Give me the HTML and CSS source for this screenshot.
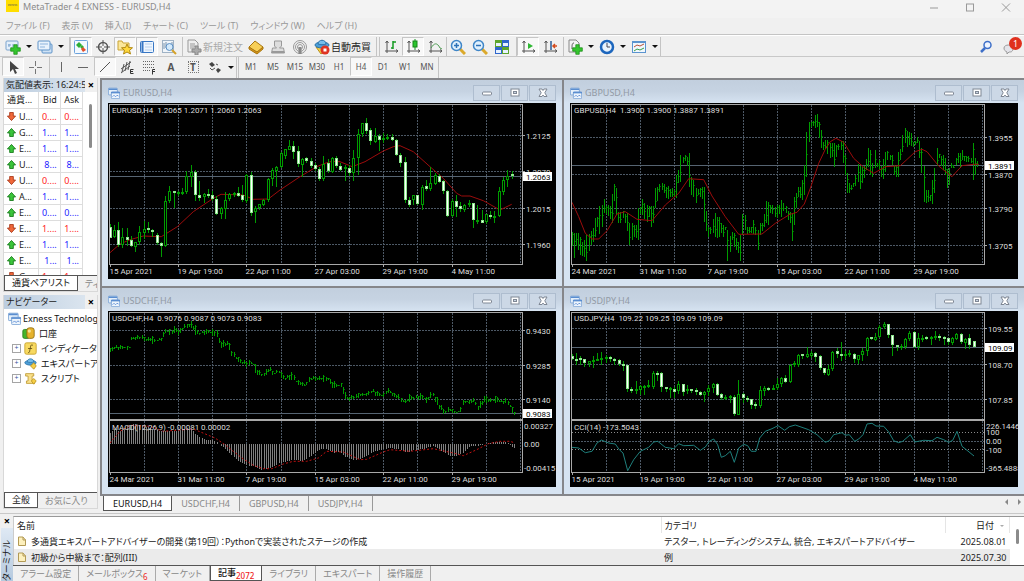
FILE: index.html
```html
<!DOCTYPE html>
<html lang="ja">
<head>
    <meta charset="UTF-8">
    <meta name="viewport" content="width=device-width, initial-scale=1.0">
    <title>MetaTrader 4 EXNESS - EURUSD,H4</title>
    <link rel="stylesheet" href="styles.css">
</head>
<body>

<svg class="sprite" aria-hidden="true">
    <symbol id="charts" viewBox="0 0 16 16"><rect x="0.5" y="1.5" width="12" height="9" rx="1" fill="#e4effa" stroke="#6f9bd1"/><path d="M1 3h11" stroke="#5b8ed0" stroke-width="2"/><rect x="4.5" y="6.5" width="11" height="9" rx="1" fill="#eef5fc" stroke="#6f9bd1"/><path d="M4 7.500h12" stroke="#5b8ed0" stroke-width="2"/><path d="M6 13l2-2 2 2 2-2 2 1" fill="none" stroke="#4a7fd0"/></symbol>
    <symbol id="plus" viewBox="0 0 16 16"><path d="M5.5 1h5v4.500H15v5h-4.500V15h-5v-4.500H1v-5h4.500z" fill="#35c52e" stroke="#12860f"/></symbol>
    <symbol id="axes" viewBox="0 0 16 16"><path d="M4 2v12M2 12h13M2.500 4L4 2l1.500 2M13 10.500l2 1.500-2 1.500" fill="none" stroke="#555"/></symbol>
    <symbol id="up" viewBox="0 0 10 10"><path d="M5 .5L9.5 5.500H7v4H3v-4H.5z" fill="#3bc53b" stroke="#167a1b"/></symbol>
    <symbol id="down" viewBox="0 0 10 10"><path d="M5 9.5L9.5 4.500H7v-4H3v4H.5z" fill="#f0683a" stroke="#a8381a"/></symbol>
    <symbol id="doc" viewBox="0 0 10 10"><path d="M1.500 1h4.500l2.500 3v5.500h-7z" fill="#fdf0bd" stroke="#b39a55"/><path d="M6 1v3h3" fill="none" stroke="#b39a55"/></symbol>
    <symbol id="min" viewBox="0 0 12 10"><rect x="1.5" y="4" width="9" height="3" rx="1" fill="#fff" stroke="#7f8794"/></symbol>
    <symbol id="max" viewBox="0 0 12 10"><rect x="2" y="1" width="8" height="7" fill="#fff" stroke="#7f8794"/><rect x="4.5" y="3.5" width="3" height="2" fill="#c9d5e3" stroke="#7f8794"/></symbol>
    <symbol id="cls" viewBox="0 0 12 10"><path d="M2 1h3l1 1.500L7 1h3L7.800 4.800 10 8.500H7L6 7 5 8.500H2l2.200-3.700z" fill="#fff" stroke="#7f8794"/></symbol>
</svg>

<header class="titlebar">
    <span class="logo">exness</span>
    <h1>MetaTrader 4 EXNESS - EURUSD,H4</h1>
    <div class="caption">
        <button aria-label="Minimize"><svg viewBox="0 0 10 10"><path d="M1 6.500h8"/></svg></button>
        <button aria-label="Maximize"><svg viewBox="0 0 10 10"><rect x="1.5" y="2.5" width="7" height="7"/></svg></button>
        <button aria-label="Close"><svg viewBox="0 0 10 10"><path d="M1 2l8 8M9 2l-8 8"/></svg></button>
    </div>
</header>

<nav class="menu">
    <button>ファイル (F)</button>
    <button>表示 (V)</button>
    <button>挿入(I)</button>
    <button>チャート (C)</button>
    <button>ツール (T)</button>
    <button>ウィンドウ (W)</button>
    <button>ヘルプ (H)</button>
</nav>

<div class="toolbars">
    <div class="toolbar">
        <button class="tool" aria-label="New chart"><svg viewBox="0 0 16 16"><rect x="1" y="2" width="12" height="9" rx="1" fill="#e4effa" stroke="#7aa3cd"/><path d="M3 6h3M4 5v3M8 5v3" stroke="#7aa3cd"/><use href="#plus" x="5" y="5" width="11" height="11"/></svg></button>
        <button class="drop" aria-label="Chart list"></button>
        <button class="tool" aria-label="Profiles"><svg viewBox="0 0 16 16"><rect x="5" y="5" width="10" height="9" rx="1" fill="#cfe2f5" stroke="#5e93c8"/><rect x="1" y="2" width="12" height="9" rx="1" fill="#e8f2fc" stroke="#5e93c8"/><path d="M3 5h8M3 8h5" stroke="#8db4dd"/></svg></button>
        <button class="drop" aria-label="Profile list"></button>
        <i class="sep wide"></i>
        <button class="tool on" aria-label="Market watch"><svg viewBox="0 0 16 16"><rect x="1.5" y="1.5" width="13" height="13" rx="1" fill="#f3f9ff" stroke="#6ba2dc"/><path d="M3 6l3-3 3 3-3 3z" fill="#2fae35"/><path d="M7 8l2-2 2 2-2 2z" fill="#2fae35"/><path d="M8 10l2-2 3 3-3 2z" fill="#e3502b"/></svg></button>
        <button class="tool" aria-label="Data window"><svg viewBox="0 0 16 16"><circle cx="8" cy="8" r="4.5" fill="none" stroke="#555" stroke-width="1.5"/><path d="M8 1v6M8 9v6M1 8h6M9 8h6" stroke="#555"/></svg></button>
        <button class="tool on" aria-label="Navigator"><svg viewBox="0 0 16 16"><path d="M1 2h4l1 2h6v7H1z" fill="#fbe79a" stroke="#c9a437"/><path d="M10 5l1.500 3.500 4 .300-3 2.500 1 3.700-3.500-2-3.500 2 1-3.700-3-2.500 4-.300z" fill="#ffd83b" stroke="#b38a12"/></svg></button>
        <button class="tool on" aria-label="Terminal"><svg viewBox="0 0 16 16"><rect x="1.5" y="2.5" width="13" height="11" rx="1" fill="#eef6ff" stroke="#3877c4"/><path d="M3.500 3v10" stroke="#3877c4" stroke-width="2"/><path d="M6 5h7M6 8h7M6 11h7" stroke="#b9d0ea"/></svg></button>
        <button class="tool" aria-label="Strategy tester"><svg viewBox="0 0 16 16"><rect x="1.5" y="1.5" width="11" height="12" fill="#f0f5fa" stroke="#9fb2c5"/><path d="M3 4v6M5 3v6M11 3v4" stroke="#7a93ab"/><circle cx="8.5" cy="8" r="3.5" fill="#d4eafb" stroke="#5b8fc4"/><path d="M11 11l4 4" stroke="#d5a229" stroke-width="2"/></svg></button>
        <i class="sep"></i>
        <button class="tool text off"><svg viewBox="0 0 16 16"><path d="M2 1h7l3 3v9H2z" fill="#eee" stroke="#999"/><path d="M4 5h5M4 7h5M4 9h4" stroke="#999"/><path d="M9 7h3v3h3v3h-3v3H9v-3H6v-3h3z" fill="#aaa" stroke="#888"/></svg>新規注文</button>
        <button class="tool" aria-label="MetaEditor"><svg viewBox="0 0 16 16"><path d="M1 8l6-6 8 6-6 6z" fill="#f7cf57" stroke="#a8760f"/><path d="M1 8v2l8 5 6-5V8l-6 5z" fill="#d9971c" stroke="#a8760f"/></svg></button>
        <button class="tool" aria-label="Market"><svg viewBox="0 0 16 16"><path d="M4.500 2h7v5l-2 2h4l1 5H1.500l1-5h4l-2-2z" fill="#ddd" stroke="#999"/><path d="M2 13h12" stroke="#999" stroke-width="2"/></svg></button>
        <button class="tool" aria-label="Signals"><svg viewBox="0 0 16 16"><g fill="none" stroke="#999"><circle cx="8" cy="8" r="6.5"/><circle cx="8" cy="8" r="4.5"/><circle cx="8" cy="8" r="2.5"/></g><path d="M8 8v7" stroke="#888" stroke-width="3"/></svg></button>
        <button class="tool text"><svg viewBox="0 0 16 16"><path d="M2 8l5 7 7-6z" fill="#f6cf45" stroke="#b8901d"/><ellipse cx="8" cy="6" rx="7" ry="3" fill="#4c9fd8" stroke="#2c72a8"/><path d="M4 5c0-5 8-5 8 0-2 1-6 1-8 0z" fill="#76bdea" stroke="#2c72a8"/><circle cx="11" cy="11" r="4.5" fill="#df3322"/><rect x="9.5" y="9.5" width="3" height="3" fill="#fff"/></svg>自動売買</button>
        <i class="sep double"></i>
        <button class="tool" aria-label="Bar chart"><svg viewBox="0 0 16 16"><use href="#axes"/><path d="M10 2v8M8 9h2M10 3h3" stroke="#159a22" stroke-width="1.5"/></svg></button>
        <button class="tool on" aria-label="Candlesticks"><svg viewBox="0 0 16 16"><use href="#axes"/><path d="M10 0v11" stroke="#159a22"/><rect x="8" y="2" width="4" height="6" fill="#29c52c" stroke="#148519"/></svg></button>
        <button class="tool" aria-label="Line chart"><svg viewBox="0 0 16 16"><use href="#axes"/><path d="M4 9c3-5 6-6 9 0l2 1" fill="none" stroke="#4c9a50"/></svg></button>
        <i class="sep line"></i>
        <button class="tool" aria-label="Zoom in"><svg viewBox="0 0 16 16"><path d="M10 10l5 5" stroke="#dba92b" stroke-width="3"/><circle cx="6.5" cy="6.5" r="5" fill="#dff0fd" stroke="#3f86c8" stroke-width="1.5"/><path d="M4 6.500h5M6.500 4v5" stroke="#2d72b8" stroke-width="1.5"/></svg></button>
        <button class="tool" aria-label="Zoom out"><svg viewBox="0 0 16 16"><path d="M10 10l5 5" stroke="#dba92b" stroke-width="3"/><circle cx="6.5" cy="6.5" r="5" fill="#dff0fd" stroke="#3f86c8" stroke-width="1.5"/><path d="M4 6.500h5" stroke="#2d72b8" stroke-width="1.5"/></svg></button>
        <button class="tool" aria-label="Tile windows"><svg viewBox="0 0 16 16"><rect x="1" y="1" width="7" height="7" fill="#5da52d"/><rect x="8" y="1" width="7" height="7" fill="#2f66cc"/><rect x="1" y="8" width="7" height="7" fill="#2f66cc"/><rect x="8" y="8" width="7" height="7" fill="#5da52d"/><path d="M2 5.500h5M9 5.500h5M2 12.500h5M9 12.500h5" stroke="#e8f2ff" stroke-width="3"/></svg></button>
        <i class="sep wide"></i>
        <button class="tool on" aria-label="Auto scroll"><svg viewBox="0 0 16 16"><use href="#axes"/><path d="M8 4l5 3-5 3z" fill="#2fb833"/></svg></button>
        <button class="tool" aria-label="Chart shift"><svg viewBox="0 0 16 16"><use href="#axes"/><path d="M9 2v9" stroke="#2a5b94" stroke-width="1.5"/><path d="M15 7h-4M13 5l-2 2 2 2" fill="none" stroke="#d24a1d" stroke-width="1.5"/></svg></button>
        <i class="sep"></i>
        <button class="tool" aria-label="Indicators"><svg viewBox="0 0 16 16"><path d="M2 1h7l3 3v9H2z" fill="#f3f3f3" stroke="#888"/><path d="M7 4c-2 0-2 2-2 6" fill="none" stroke="#555"/><use href="#plus" x="5" y="5" width="11" height="11"/></svg></button>
        <button class="drop" aria-label="Indicator list"></button>
        <button class="tool" aria-label="Periods"><svg viewBox="0 0 16 16"><circle cx="8" cy="8" r="6" fill="#e9f3fd" stroke="#1d66bd" stroke-width="2.5"/><path d="M8 4v4h3" fill="none" stroke="#445"/></svg></button>
        <button class="drop" aria-label="Period list"></button>
        <button class="tool" aria-label="Templates"><svg viewBox="0 0 16 16"><rect x="1.5" y="2.5" width="13" height="11" fill="#f1f7fd" stroke="#5b94cf"/><path d="M1 3h14" stroke="#5b94cf" stroke-width="2"/><path d="M3 8l3-2 3 1 4-2" fill="none" stroke="#b85037"/><path d="M3 12l3-2 3 1 4-2" fill="none" stroke="#37a046"/></svg></button>
        <button class="drop" aria-label="Template list"></button>
        <i class="sep line"></i>
        <div class="right">
            <button class="tool" aria-label="Search"><svg viewBox="0 0 16 16"><circle cx="9.5" cy="6" r="3.5" fill="#eef4ff" stroke="#3e6fc8" stroke-width="1.5"/><path d="M7 9l-4 4" stroke="#3e6fc8" stroke-width="2.5"/></svg></button>
            <button class="tool alert" aria-label="Notifications"><svg viewBox="0 0 16 16"><path d="M1 9c0-4 9-4 9 0s-2 4-4 4l-2 2v-2c-2-1-3-2-3-4z" fill="#e4e4ea" stroke="#999"/></svg><span class="badge">1</span></button>
        </div>
    </div>
    <div class="toolbar">
        <button class="tool on" aria-label="Cursor"><svg viewBox="0 0 16 16"><path d="M5 2v11l3-3 2 5 2-1-2-4h4z" fill="#444"/></svg></button>
        <button class="tool" aria-label="Crosshair"><svg viewBox="0 0 16 16"><path d="M8.500 2v5M8.500 10v5M2 8.500h5M10 8.500h5" stroke="#777"/></svg></button>
        <i class="sep wide"></i>
        <button class="tool" aria-label="Vertical line"><svg viewBox="0 0 16 16"><path d="M8.500 3v10" stroke="#666"/></svg></button>
        <button class="tool" aria-label="Horizontal line"><svg viewBox="0 0 16 16"><path d="M3 8.500h10" stroke="#666"/></svg></button>
        <button class="tool on" aria-label="Trendline"><svg viewBox="0 0 16 16"><path d="M3 13L13 3" stroke="#555"/></svg></button>
        <button class="tool" aria-label="Channel"><svg viewBox="0 0 16 16"><path d="M2 10l10-7M2 14l9-7M5 5L3 13M8 3L6 12M11 2L9 11" stroke="#555"/><path d="M14.500 10.500h-3v4h3M11 12.500h3" fill="none" stroke="#333"/></svg></button>
        <button class="tool" aria-label="Fibonacci"><svg viewBox="0 0 16 16"><path d="M2 2.500h12M2 5.500h12M2 8.500h12M2 11.500h7" stroke="#666" stroke-dasharray="1 1"/><path d="M14 10.500h-2.500v5M11 12.500h3" fill="none" stroke="#333"/></svg></button>
        <button class="tool letter">A</button>
        <button class="tool letter boxed"><span>T</span></button>
        <button class="tool" aria-label="Arrows"><svg viewBox="0 0 16 16"><path d="M5 3l3 3-3 2-3-3zM11 9l3 2-3 3-2-3z" fill="#444"/><path d="M3 9l2 2 3-2M9 5l2 1" fill="none" stroke="#555"/></svg></button>
        <button class="drop" aria-label="Arrow list"></button>
        <i class="sep double narrow"></i>
        <button class="tool">M1</button>
        <button class="tool">M5</button>
        <button class="tool">M15</button>
        <button class="tool">M30</button>
        <button class="tool">H1</button>
        <button class="tool on">H4</button>
        <button class="tool">D1</button>
        <button class="tool">W1</button>
        <button class="tool">MN</button>
        <i class="sep line"></i>
    </div>
</div>

<div class="middle">
    <aside class="side">
        <section class="panel watch">
            <div class="panel-head"><h2>気配値表示: 16:24:56</h2><button aria-label="Close">×</button></div>
            <div class="panel-body">
                <table class="quotes">
                    <thead><tr><th>通貨...</th><th>Bid</th><th>Ask</th></tr></thead>
                    <tbody>
                        <tr class="fall"><td><svg><use href="#down"/></svg>U...</td><td>0....</td><td>0....</td></tr>
                        <tr><td><svg><use href="#up"/></svg>G...</td><td>1....</td><td>1....</td></tr>
                        <tr><td><svg><use href="#up"/></svg>E...</td><td>1....</td><td>1....</td></tr>
                        <tr><td><svg><use href="#up"/></svg>U...</td><td>8...</td><td>8...</td></tr>
                        <tr class="fall"><td><svg><use href="#down"/></svg>U...</td><td>0....</td><td>0....</td></tr>
                        <tr><td><svg><use href="#up"/></svg>A...</td><td>1....</td><td>1....</td></tr>
                        <tr><td><svg><use href="#up"/></svg>E...</td><td>0....</td><td>0....</td></tr>
                        <tr class="fall"><td><svg><use href="#down"/></svg>E...</td><td>1....</td><td>1....</td></tr>
                        <tr><td><svg><use href="#up"/></svg>E...</td><td>1....</td><td>1....</td></tr>
                        <tr><td><svg><use href="#up"/></svg>E...</td><td>1...</td><td>1...</td></tr>
                        <tr class="fall"><td><svg><use href="#down"/></svg>G...</td><td>1....</td><td>1....</td></tr>
                    </tbody>
                </table>
                <i class="thumb"></i>
            </div>
            <div class="tabs"><button class="active">通貨ペアリスト</button><button>ティックチャート</button></div>
        </section>
        <section class="panel navigator">
            <div class="panel-head"><h2>ナビゲーター</h2><button aria-label="Close">×</button></div>
            <ul class="tree">
                <li class="root"><svg><use href="#charts"/></svg>Exness Technologies</li>
                <li><svg viewBox="0 0 16 16"><rect x="1" y="3" width="8" height="11" rx="2" fill="#45b52d" stroke="#247d18"/><rect x="6" y="1" width="9" height="13" rx="3" fill="#e5b22c" stroke="#8d6a10"/><circle cx="9" cy="5" r="2" fill="#f8e29a"/></svg>口座</li>
                <li class="node"><svg viewBox="0 0 16 16"><rect x="1" y="1" width="14" height="14" rx="2" fill="#f7d960" stroke="#c39c25"/><path d="M11 4c-2-1-3 0-3 2l-1 5c0 2-1 2-2 2M5 8h5" fill="none" stroke="#5c4a10"/></svg>インディケータ</li>
                <li class="node"><svg viewBox="0 0 16 16"><ellipse cx="8" cy="7" rx="7" ry="3" fill="#4c9fd8" stroke="#2c72a8"/><path d="M4 6c0-5 8-5 8 0-2 1-6 1-8 0z" fill="#76bdea" stroke="#2c72a8"/><path d="M12 7l3 4-3 4-4-4z" fill="#f6cf45" stroke="#b8901d"/></svg>エキスパートアドバイザ</li>
                <li class="node"><svg viewBox="0 0 16 16"><path d="M2 2h10v3h-2v6h3v3H3v-3h2V5H2z" fill="#f9e08a" stroke="#bd962c"/><path d="M12 8l3 3-3 4-3-4z" fill="#f6cf45" stroke="#b8901d"/></svg>スクリプト</li>
            </ul>
            <div class="tabs"><button class="active">全般</button><button>お気に入り</button></div>
        </section>
    </aside>

    <main class="workspace">
        <div class="windows">
            <section class="window">
                <header><svg class="win-icon"><use href="#charts"/></svg><h3>EURUSD,H4</h3><button aria-label="Minimize"><svg><use href="#min"/></svg></button><button aria-label="Maximize"><svg><use href="#max"/></svg></button><button aria-label="Close"><svg><use href="#cls"/></svg></button></header>
                <svg class="chart" id="eurusd" viewBox="0 0 448 176"></svg>
            </section>
            <section class="window">
                <header><svg class="win-icon"><use href="#charts"/></svg><h3>GBPUSD,H4</h3><button aria-label="Minimize"><svg><use href="#min"/></svg></button><button aria-label="Maximize"><svg><use href="#max"/></svg></button><button aria-label="Close"><svg><use href="#cls"/></svg></button></header>
                <svg class="chart" id="gbpusd" viewBox="0 0 448 176"></svg>
            </section>
            <section class="window">
                <header><svg class="win-icon"><use href="#charts"/></svg><h3>USDCHF,H4</h3><button aria-label="Minimize"><svg><use href="#min"/></svg></button><button aria-label="Maximize"><svg><use href="#max"/></svg></button><button aria-label="Close"><svg><use href="#cls"/></svg></button></header>
                <svg class="chart" id="usdchf" viewBox="0 0 448 176"></svg>
            </section>
            <section class="window">
                <header><svg class="win-icon"><use href="#charts"/></svg><h3>USDJPY,H4</h3><button aria-label="Minimize"><svg><use href="#min"/></svg></button><button aria-label="Maximize"><svg><use href="#max"/></svg></button><button aria-label="Close"><svg><use href="#cls"/></svg></button></header>
                <svg class="chart" id="usdjpy" viewBox="0 0 448 176"></svg>
            </section>
        </div>
        <div class="tabs chart-tabs">
            <button class="active">EURUSD,H4</button><button>USDCHF,H4</button><button>GBPUSD,H4</button><button>USDJPY,H4</button>
            <div class="arrows"><button class="prev" aria-label="Previous"></button><button class="next" aria-label="Next"></button></div>
        </div>
    </main>
</div>

<section class="terminal">
    <div class="strip"><button aria-label="Close">×</button><h2>ターミナル</h2></div>
    <div class="terminal-main">
        <div class="articles-wrap">
            <table class="articles">
                <thead><tr><th class="name">名前</th><th>カテゴリ</th><th class="date">日付</th></tr></thead>
                <tbody>
                    <tr><td><svg><use href="#doc"/></svg><a href="#">多通貨エキスパートアドバイザーの開発（第19回）：Pythonで実装されたステージの作成</a></td><td>テスター, トレーディングシステム, 統合, エキスパートアドバイザー</td><td class="date">2025.08.01</td></tr>
                    <tr><td><svg><use href="#doc"/></svg><a href="#">初級から中級まで：配列(III)</a></td><td>例</td><td class="date">2025.07.30</td></tr>
                </tbody>
            </table>
            <div class="scroll"><i class="thumb"></i></div>
        </div>
        <div class="tabs">
            <button>アラーム設定</button><button>メールボックス<sub>6</sub></button><button>マーケット</button><button class="active">記事<sub>2072</sub></button><button>ライブラリ</button><button>エキスパート</button><button>操作履歴</button>
        </div>
    </div>
</section>

<script src="charts.js"></script>
</body>
</html>
```
FILE: styles.css
```css
* {
    box-sizing: border-box;
}
body {
    display: flex;
    flex-direction: column;
    min-height: 100vh;
    margin: 0;
    background: #f0f0f0;
    color: #222;
    font-family: "Noto Sans", "Noto Sans CJK JP", sans-serif;
    font-size: 9px;
    line-height: 16px;
    font-feature-settings: "palt";
    overflow: hidden;
}
h1, h2, h3, ul {
    margin: 0;
    padding: 0;
    font-size: inherit;
    font-weight: normal;
    list-style: none;
}
button {
    padding: 0;
    border: 0;
    background: none;
    color: inherit;
    font: inherit;
    font-feature-settings: inherit;
    white-space: nowrap;
}
svg {
    display: block;
    flex: none;
}
.sprite {
    width: 0;
    height: 0;
    position: absolute;
}

/* title and menu */
.titlebar {
    display: flex;
    height: 18px;
    padding-left: 6px;
    background: #f3f3f3;
    color: #8b8b8b;
}
.logo {
    width: 13px;
    height: 12px;
    margin-right: 4px;
    background: #ffde00;
    color: #555;
    font-size: 3px;
    line-height: 11px;
    text-align: center;
}
.titlebar h1 {
    line-height: 13px;
}
.caption {
    display: flex;
    margin-left: auto;
}
.caption button {
    width: 36px;
    height: 13px;
}
.caption svg {
    width: 10px;
    height: 11px;
    margin: auto;
    fill: none;
    stroke: #999;
}
.menu {
    display: flex;
    gap: 12px;
    height: 17px;
    padding-left: 6px;
    border-bottom: 1px solid #c4c4c4;
    color: #999;
}

/* toolbars */
.toolbars {
    height: 43px;
    color: #555;
}
.toolbar {
    display: flex;
    height: 21px;
    padding: 1px 0 0 2px;
    border-top: 1px solid #fff;
}
.toolbar + .toolbar {
    height: 22px;
    padding-top: 0;
    border-top-color: #c8c8c8;
}
.tool {
    display: flex;
    align-items: center;
    justify-content: center;
    flex: none;
    width: 22px;
    height: 19px;
    font-size: 8px;
}
.tool svg {
    width: 16px;
    height: 16px;
}
.tool.on {
    background: #f8f8f8;
    border: 1px solid #c6c6c6;
    border-right-color: #fff;
    border-bottom-color: #fff;
}
.tool.text {
    gap: 1px;
    width: auto;
    padding: 0 2px 0 3px;
    color: #222;
    font-size: 10px;
    font-feature-settings: normal;
}
.tool.text.off {
    color: #aaa;
}
.tool.letter {
    font-size: 10px;
    font-weight: bold;
}
.boxed span {
    border: 1px dotted #777;
    width: 11px;
    line-height: 10px;
}
.drop {
    width: 10px;
}
.drop::after {
    content: "";
    display: block;
    width: 0;
    margin: auto;
    border: 3px solid transparent;
    border-top-color: #111;
    border-bottom: 0;
}
.sep {
    flex: none;
    width: 3px;
    border-right: 1px solid #c4c4c4;
}
.sep.wide {
    width: 4px;
}
.sep.line {
    width: 1px;
}
.sep.double {
    width: 4px;
    margin-left: 3px;
    border-left: 1px solid #c4c4c4;
}
.sep.double.narrow {
    width: 3px;
    margin: 0 1px 0 0;
}
.right {
    display: flex;
    gap: 3px;
    margin: 0 2px 0 auto;
}
.alert {
    position: relative;
}
.badge {
    position: absolute;
    top: 0;
    right: 0;
    width: 13px;
    height: 13px;
    border-radius: 50%;
    background: #e0301e;
    color: #fff;
    font-size: 9px;
    line-height: 13px;
}

/* side panels */
.middle {
    display: flex;
    flex: 1;
}
.side {
    display: flex;
    flex-direction: column;
    flex: none;
    gap: 3px;
    width: 100px;
    padding: 0 2px 4px 3px;
}
.panel {
    display: flex;
    flex-direction: column;
    border: 1px solid #d8d8d8;
    border-top: 0;
    background: #fff;
    overflow: hidden;
}
.watch {
    height: 214px;
}
.navigator {
    flex: 1;
}
.panel-head {
    display: flex;
    flex: none;
    height: 14px;
    padding-left: 2px;
    background: linear-gradient(to right, #bccddf, #dfe8f1);
    line-height: 13px;
}
.panel-head h2 {
    flex: 1;
    overflow: hidden;
    white-space: nowrap;
}
.panel-head button,
.strip button {
    width: 12px;
    background: #f0f0f0;
    color: #000;
    font-size: 11px;
    font-weight: bold;
    line-height: 12px;
}
.panel-body {
    display: flex;
    flex: 1;
    min-height: 0;
    overflow: hidden;
}
.quotes {
    flex: none;
    width: 79px;
    border-collapse: collapse;
    table-layout: fixed;
    color: #2222ff;
}
.quotes th,
.quotes td {
    height: 16px;
    padding: 0 3px 0 0;
    border-right: 1px solid #ddd;
    border-bottom: 1px solid #ddd;
    font-weight: normal;
    line-height: 15px;
    text-align: right;
    white-space: nowrap;
}
.quotes th,
.quotes td:first-child {
    color: #222;
}
.quotes th:first-child,
.quotes td:first-child {
    width: 34px;
    padding: 0 0 0 3px;
    text-align: left;
}
.quotes svg {
    float: left;
    width: 9px;
    height: 9px;
    margin: 3px 3px 0 0;
}
.quotes .fall {
    color: #ff2222;
}
.thumb {
    width: 3px;
    height: 44px;
    margin: 12px 0 0 6px;
    border-radius: 2px;
    background: #8b8b8b;
}

/* tabs */
.tabs {
    display: flex;
    flex: none;
    height: 16px;
    border-top: 1px solid #555;
    background: #f0f0f0;
    color: #888;
    overflow: hidden;
}
.tabs button {
    flex: none;
    padding: 0 7px;
    line-height: 14px;
}
.tabs .active {
    margin-top: -1px;
    border: 1px solid #555;
    border-top: 0;
    background: #fff;
    color: #111;
}
.tabs sub {
    color: #e22;
    font-size: 8px;
    line-height: 8px;
}
.tree {
    flex: 1;
    padding-left: 4px;
    line-height: 15px;
    white-space: nowrap;
}
.tree li {
    display: flex;
    align-items: center;
    gap: 4px;
    padding-left: 14px;
    color: #111;
}
.tree svg {
    width: 13px;
    height: 13px;
}
.tree .root {
    gap: 2px;
    padding: 2px 0 0;
}
.tree .node {
    padding-left: 4px;
}
.tree .node::before {
    content: "+";
    flex: none;
    width: 7px;
    height: 7px;
    margin-right: -1px;
    border: 1px solid #a5a5a5;
    color: #35539b;
    font-size: 7px;
    line-height: 5px;
    text-align: center;
}

/* chart windows */
.workspace {
    display: flex;
    flex-direction: column;
    flex: 1;
    min-width: 0;
}
.windows {
    display: grid;
    grid-template-columns: 1fr 1fr;
    border-bottom: 2px solid #85868a;
}
.window {
    min-width: 0;
    padding: 0 6px 7px;
    border: solid #85868a;
    border-width: 2px 0 0 2px;
    background: #d6e3f1;
}
.window header {
    display: flex;
    align-items: center;
    gap: 1px;
    height: 23px;
    margin: 0 -6px;
    padding: 3px 6px 0;
    background: linear-gradient(#c2cfde, #c6d3e2 50%, #d6e3f1);
}
.window h3 {
    flex: 1;
    margin-left: 2px;
    color: #929aa5;
}
.win-icon {
    width: 12px;
    height: 12px;
}
.window header button {
    width: 27px;
    height: 16px;
    border: 1px solid #aebdcf;
    background: #ccd8e6;
}
.window header button svg {
    width: 12px;
    height: 10px;
    margin: auto;
}
.chart {
    width: 100%;
    height: auto;
    background: #000;
    font-family: Roboto, sans-serif;
    font-size: 8px;
    shape-rendering: crispEdges;
}
.chart text {
    fill: #ddd;
}
.chart .bid-text {
    fill: #000;
}
.chart .frame {
    fill: none;
    stroke: #a8a8a8;
}
.chart .grid {
    stroke: #4d5966;
    stroke-dasharray: 2 1;
}
.chart .bid {
    stroke: #566472;
}
.chart .bid-box {
    fill: #fff;
}
.chart .wick {
    stroke: #009c00;
}
.chart .tick {
    stroke: #006400;
}
.chart .rise {
    fill: #000;
    stroke: #009c00;
}
.chart .fall {
    fill: #fff;
    stroke: #8ee88e;
}
.chart polyline {
    fill: none;
    shape-rendering: auto;
}
.chart .average {
    stroke: #9c0c0c;
}
.chart .signal {
    stroke: #c01010;
    stroke-dasharray: 2 2;
}
.chart .cci {
    stroke: #1f7f7c;
}
.chart .histogram {
    stroke: #808080;
}
.chart .level {
    stroke: #8a8a8a;
    stroke-dasharray: 1 2;
}
.chart-tabs {
    flex: 1;
    margin: 0 0 0 3px;
    border-top: 0;
}
.chart-tabs button {
    height: 15px;
    padding: 0 9px;
    border-right: 1px solid #999;
    line-height: 16px;
}
.chart-tabs .active {
    margin: 0;
}
.arrows {
    display: flex;
    gap: 10px;
    margin: 0 2px 0 auto;
}
.arrows button {
    width: 4px;
    height: 12px;
    padding: 0;
    border: 0;
}
.arrows button::after {
    content: "";
    display: block;
    border: 3px solid transparent;
    border-right-color: #888;
    border-left: 0;
}
.arrows .next::after {
    border-left: 3px solid #888;
    border-right: 0;
}

/* terminal */
.terminal {
    display: flex;
    height: 68px;
    border-top: 1px solid #c8c8c8;
}
.strip {
    display: flex;
    flex-direction: column;
    width: 13px;
    padding-left: 1px;
    overflow: hidden;
}
.strip button {
    height: 14px;
    flex: none;
}
.strip h2 {
    flex: 1;
    background: linear-gradient(to top, #dfe9f4, #b5c9de);
    line-height: 11px;
    writing-mode: vertical-rl;
    text-orientation: sideways;
    transform: rotate(180deg);
}
.terminal-main {
    display: flex;
    flex-direction: column;
    flex: 1;
    min-width: 0;
    padding-top: 2px;
}
.terminal .tabs button {
    border-right: 1px solid #aaa;
}
.terminal .tabs .active {
    border-color: #555;
    font-weight: 500;
}
.articles-wrap {
    display: flex;
    flex: 1;
    border-top: 1px solid #999;
    border-left: 1px solid #ccc;
    background: #fff;
}
.articles {
    flex: 1;
    border-collapse: collapse;
    table-layout: fixed;
}
.articles th,
.articles td {
    height: 16px;
    padding: 0 3px;
    font-weight: normal;
    line-height: 15px;
    text-align: left;
    white-space: nowrap;
    overflow: hidden;
}
.articles th {
    border-right: 1px solid #e5e5e5;
}
.articles .name {
    width: 65%;
}
.articles .date {
    width: 64px;
    text-align: right;
}
.articles th.date::after {
    content: "";
    display: inline-block;
    margin: 0 2px 2px 6px;
    border: 2px solid transparent;
    border-top-color: #aaa;
    border-bottom: 0;
}
.articles tr:nth-child(2) {
    background: #ebebeb;
}
.articles a {
    color: inherit;
    text-decoration: none;
}
.articles svg {
    float: left;
    width: 10px;
    height: 10px;
    margin: 2px 4px 0 0;
}
.scroll {
    width: 14px;
}
.scroll .thumb {
    display: block;
    height: 15px;
}
```
FILE: charts.js
```javascript
// Chart data is kept in thirds of a chart pixel.
// Candles: high, open, close, low. Bars: x, high, low.
const eurCandles = `433 441 473 473|435 473 452 475|427 451 496 500|445 498 473 504|445 473 482 498|467 480 498 502|485 503 487 516|437 487 457 496|422 458 447 478|425 445 452 460|446 450 453 472|460 465 490 495|486 489 497 530|348 497 363 500|317 364 335 368|333 335 340 385|334 341 338 347|324 341 336 346|272 338 289 342|254 291 277 320|270 277 345 362|303 345 355 362|340 354 344 370|328 343 348 355|333 346 358 362|348 358 403 406|382 404 386 418|336 386 360 418|340 360 344 363|336 346 340 350|322 340 348 352|316 347 362 367|281 362 285 368|276 285 398 408|379 398 385 428|372 386 374 390|358 374 360 378|293 360 297 367|265 298 272 318|258 273 262 322|217 262 221 265|206 230 209 236|181 209 198 211|184 198 215 238|197 215 253 262|235 255 238 292|230 236 244 248|233 244 258 265|250 256 268 272|260 268 298 302|228 298 252 303|236 251 276 278|230 276 235 278|229 234 259 264|250 258 270 272|256 268 263 302|256 264 280 288|210 280 235 302|146 236 163 284|128 163 130 170|114 130 153 163|145 151 185 196|145 185 168 190|163 169 180 213|158 180 174 190|163 176 171 180|163 171 181 184|176 180 225 228|218 225 248 262|230 247 362 370|352 360 374 380|345 362 346 375|344 346 374 376|315 374 321 390|300 320 329 332|262 328 310 332|278 312 286 315|283 288 305 308|300 303 333 343|330 333 408 410|356 408 363 412|344 363 381 412|365 380 390 396|372 390 376 396|360 376 370 380|368 370 422 444|376 424 420 432|390 420 428 430|402 428 404 432|394 406 413 416|393 414 409 430|322 410 335 412|292 335 300 345|270 302 290 320|272 284 291 296`;

const jpyCandles = `198 206 214 215|196 214 219 232|205 212 218 232|213 215 228 238|220 230 221 238|204 221 218 240|195 219 213 220|193 214 210 230|200 211 208 225|203 208 215 222|211 214 217 230|213 217 230 233|220 230 235 248|231 233 306 312|296 304 308 316|278 309 305 318|290 308 296 322|290 299 295 322|275 297 293 300|248 298 256 302|248 256 260 280|252 257 300 312|297 299 303 312|298 306 302 330|296 303 312 330|280 312 290 318|287 289 312 325|290 312 305 318|302 305 309 315|300 308 315 320|308 312 320 325|308 322 312 342|290 313 301 325|286 302 290 315|285 289 322 325|316 320 333 336|320 334 328 336|320 330 326 345|322 327 378 384|277 380 318 382|316 320 332 345|325 330 336 342|332 334 352 362|343 350 356 362|295 354 307 360|293 308 300 325|296 300 304 308|290 304 300 305|270 302 289 305|266 290 272 298|262 270 281 284|228 282 232 285|218 233 227 236|198 232 201 236|197 200 207 212|178 208 198 210|190 203 195 210|192 196 208 222|202 206 242 246|240 242 258 262|230 260 243 264|188 244 192 248|180 191 200 210|162 199 203 220|190 203 199 212|185 200 196 206|196 199 215 225|200 216 202 228|180 202 190 220|146 192 152 205|147 149 154 156|135 156 147 158|112 148 117 150|102 118 110 122|107 109 143 150|140 143 173 204|170 173 180 188|168 182 176 186|150 178 153 182|128 154 135 158|130 134 178 180|136 178 152 185|142 154 150 162|143 147 151 155|143 151 147 170|128 149 145 156|138 146 151 158|143 149 155 170|150 152 165 170|148 165 151 172|136 152 138 155|136 138 163 168|150 164 153 182|138 152 174 182|158 160 178 178`;

const gbpBars = `30 455 497|36 460 535|43 460 497|50 460 510|56 470 525|62 485 528|68 480 530|74 465 542|81 462 512|87 453 495|94 445 485|100 415 470|106 410 440|113 378 462|120 374 440|126 358 400|132 378 402|138 375 408|145 378 418|151 342 430|157 312 362|163 324 405|170 395 430|176 395 430|184 392 415|190 402 428|197 400 452|203 428 494|210 430 480|216 436 470|222 436 475|229 385 480|235 380 402|242 358 404|248 370 418|255 376 425|261 378 412|267 378 442|274 378 428|280 325 385|287 322 362|293 312 335|300 308 330|306 312 340|312 320 355|319 318 358|325 326 350|332 325 352|338 330 350|344 285 355|350 270 310|356 225 305|363 232 248|370 224 242|376 232 258|382 220 320|388 290 345|395 300 350|402 325 370|408 328 345|415 325 350|421 322 358|427 322 425|433 392 452|440 440 470|446 440 462|453 418 460|459 398 472|465 410 475|472 410 472|478 430 460|485 436 470|491 440 450|497 450 542|504 468 515|510 455 480|516 460 500|523 475 510|530 485 520|536 465 542|542 402 465|549 405 450|556 440 462|562 440 460|568 440 460|575 420 463|581 440 465|588 450 510|594 430 465|600 430 452|607 402 440|613 363 430|620 365 435|626 375 400|632 375 402|640 380 410|646 375 415|652 375 402|659 360 410|665 370 392|672 378 400|678 392 420|684 395 430|691 400 482|697 350 435|704 338 385|710 320 350|716 320 355|722 300 360|728 255 345|734 155 290|741 125 185|748 125 140|754 122 138|760 105 145|766 102 140|772 125 175|779 150 205|785 185 210|791 180 208|797 180 222|804 188 235|810 190 232|817 190 262|824 195 230|830 192 210|837 182 210|843 184 250|849 225 285|856 278 338|862 310 340|868 315 330|874 308 320|881 285 318|888 252 305|894 258 328|900 262 310|906 258 295|913 238 270|919 205 262|926 210 285|932 250 290|939 210 265|945 248 260|951 240 270|958 258 290|964 238 298|971 215 275|977 212 240|984 225 240|990 225 255|996 255 285|1003 258 290|1009 215 292|1016 208 240|1022 165 215|1029 143 190|1035 152 200|1041 155 195|1047 160 198|1054 185 200|1060 182 195|1067 170 190|1073 183 235|1079 205 280|1086 258 365|1092 330 370|1098 330 365|1105 345 362|1112 300 372|1118 265 340|1125 204 258|1131 222 235|1137 228 258|1144 225 270|1150 235 285|1156 268 325|1163 265 315|1169 248 265|1175 255 265|1182 235 255|1188 220 250|1195 218 265|1201 210 240|1207 228 242|1214 228 245|1220 228 245|1227 235 250|1233 190 300|1240 235 285|1246 243 262`;

const chfRange = `30 180 192|42 168 188|60 172 186|78 170 185|87 178 185|92 148 160|110 138 155|125 140 160|140 148 160|155 142 168|165 150 165|185 145 160|195 120 138|210 120 140|230 112 142|240 118 140|258 105 122|270 95 118|280 100 140|300 130 142|318 122 140|335 122 142|350 122 150|358 145 180|380 160 180|388 155 180|397 180 210|410 205 218|425 208 232|437 215 240|450 218 230|460 218 238|470 230 265|485 255 268|500 240 262|508 232 255|520 250 262|535 242 258|545 255 272|555 262 280|572 252 275|580 250 282|590 272 290|605 280 295|615 285 300|625 265 285|645 262 278|665 262 282|685 262 280|692 270 300|710 285 302|725 282 296|732 285 335|738 325 343|755 318 335|770 318 338|775 310 328|800 315 325|815 295 320|830 308 325|850 315 330|860 298 320|880 310 325|895 318 338|915 335 348|930 318 342|950 320 335|965 315 335|980 325 345|998 308 330|1010 318 350|1020 345 372|1035 365 378|1045 352 378|1055 362 376|1075 370 378|1085 345 372|1090 335 350|1110 333 348|1120 330 345|1135 345 368|1150 325 355|1160 318 345|1175 330 348|1190 320 345|1205 335 348|1220 330 348|1230 338 365|1240 360 380|1248 372 385`;

const macdValues = `30 435|45 422|60 430|80 415|100 408|130 412|150 420|180 430|200 428|230 430|260 420|275 425|285 435|300 448|315 455|345 458|360 470|385 490|410 515|440 532|460 535|485 546|510 540|540 525|555 522|580 515|610 520|640 498|660 485|680 482|700 495|720 492|735 505|765 518|790 508|830 488|870 480|900 485|920 493|950 485|975 483|1000 473|1020 485|1050 503|1070 505|1090 495|1110 475|1140 472|1180 462|1220 462|1240 478|1250 485`;

const eurAverage = '30,518 60,492 90,479 130,468 184,470 232,440 280,395 340,355 363,343 430,345 460,358 505,357 540,330 600,290 650,260 680,248 697,244 720,245 757,260 795,245 850,213 880,200 900,197 940,215 990,260 1030,295 1070,340 1085,348 1110,348 1150,362 1200,390 1235,373';
const gbpAverage = '30,367 50,410 70,460 90,477 110,477 135,452 165,402 190,395 225,418 270,422 310,375 350,340 380,296 425,299 450,348 490,410 530,463 600,462 640,430 684,403 705,397 727,372 745,325 770,250 790,208 805,185 822,175 845,187 875,235 905,262 935,280 970,260 1015,257 1060,215 1080,208 1095,215 1130,258 1170,290 1200,257 1235,253 1250,253';
const macdSignal = '30,465 60,430 95,412 150,415 190,430 280,423 345,450 375,470 400,490 430,513 460,532 490,542 515,542 550,528 580,520 620,520 655,510 680,490 730,492 780,515 800,514 850,492 870,485 930,490 1000,482 1060,495 1090,503 1130,485 1165,467 1200,460 1230,460 1245,465';
const cciLine = '30,478 50,480 70,494 90,490 105,465 118,456 140,465 160,468 172,485 183,495 197,548 215,515 235,490 260,478 275,462 287,460 310,478 335,482 350,467 365,473 395,472 415,487 430,477 442,460 455,453 467,470 478,508 490,503 505,490 517,523 530,480 545,469 557,473 568,490 582,490 593,450 610,430 630,422 648,413 668,427 682,416 700,411 740,425 765,440 790,463 802,458 815,440 840,434 850,442 862,440 878,460 890,453 903,440 915,408 930,406 942,414 965,415 980,432 995,458 1010,464 1022,460 1045,440 1058,462 1085,457 1110,458 1125,448 1145,455 1160,463 1172,457 1185,430 1200,475 1215,487 1236,504';

const aprilDates = ['15 Apr 2021', '19 Apr 19:00', '22 Apr 11:00', '27 Apr 03:00', '29 Apr 19:00', '4 May 11:00'];
const marchDates = ['24 Mar 2021', '31 Mar 11:00', '7 Apr 19:00', '15 Apr 03:00', '22 Apr 11:00', '29 Apr 19:00'];

const toX = x => x / 3 - 8;
const toY = y => y / 3 - 23;
const pixel = v => Math.round(v - 0.5) + 0.5;
const parse = text => text.split('|').map(row => row.split(' ').map(Number));

function line(cls, x1, y1, x2, y2) {
    return `<line class="${cls}" x1="${x1}" y1="${y1}" x2="${x2}" y2="${y2}"/>`;
}

function text(x, y, value, cls = '') {
    return `<text class="${cls}" x="${x}" y="${y}">${value}</text>`;
}

function polyline(cls, points) {
    const scaled = points.split(' ').map(p => {
        const [x, y] = p.split(',');
        return toX(x).toFixed(1) + ',' + toY(y).toFixed(1);
    });
    return `<polyline class="${cls}" points="${scaled.join(' ')}"/>`;
}

function candles(data) {
    return parse(data).map(([high, open, close, low], i) => {
        const x = pixel(toX(30 + i * 12.83));
        const top = pixel(toY(Math.min(open, close)));
        const height = Math.max(1, Math.round(Math.abs(close - open) / 3) - 1);
        const cls = close > open ? 'fall' : 'rise';
        return line('wick', x, toY(high), x, toY(low)) +
            `<rect class="${cls}" x="${x - 1}" y="${top}" width="2" height="${height}"/>`;
    }).join('');
}

function bars(rows) {
    return rows.map(([x, high, low], i) => {
        const px = pixel(toX(x));
        const open = pixel(toY(low - (low - high) * (i % 3 + 1) / 5));
        const close = pixel(toY(high + (low - high) * (i % 4 + 1) / 6));
        return line('tick', px - 1, open, px, open) + line('tick', px, close, px + 1, close) +
            line('wick', px, toY(high), px, toY(low));
    }).join('');
}

// value of every column at x, between the two nearest rows
function between(rows, x) {
    const next = Math.max(1, rows.findIndex(row => row[0] >= x));
    const a = rows[next - 1];
    const b = rows[next];
    const t = (x - a[0]) / (b[0] - a[0]);
    return a.map((v, k) => v + (b[k] - v) * t);
}

function spread(data) {
    const rows = parse(data);
    const result = [];
    for (let x = 30; x <= 1248; x += 6.42) {
        result.push(between(rows, x));
    }
    return result;
}

function rangeBars(data) {
    return spread(data).map(([x, high, low], i) => {
        const span = low - high;
        return [x, high + span * (i * 7 % 5) / 9, low - span * (i * 5 % 4) / 8];
    });
}

function drawChart(id, options) {
    let out = '';
    for (let i = 1; i <= 12; i++) {
        const x = pixel(toX(30 + i * 102.6));
        out += line('grid', x, 2, x, 162);
    }
    options.prices.forEach(([y, label]) => {
        const py = pixel(toY(y));
        out += line('grid', 2, py, 414, py) + line('frame', 414, py, 417, py) + text(418, py + 3, label);
    });
    const bidY = pixel(toY(options.bid[0]));
    out += line('bid', 2, bidY, 414, bidY);
    out += options.body;
    out += '<rect class="frame" x="1.5" y="1.5" width="413" height="160"/>';
    if (options.panel) {
        out += line('frame', 2, 108.5, 414, 108.5) + line('frame', 2, 109.5, 414, 109.5);
        out += text(4, 119, options.panel);
        options.panelLabels.forEach(([y, label]) => {
            out += text(416, Math.round(toY(y)) + 3, label);
        });
    }
    options.dates.forEach((date, i) => {
        const x = pixel(toX(30 + i * 205.2));
        out += line('frame', x, 162, x, 164) + text(x - 1, 171, date);
    });
    out += text(4, 10, options.title);
    out += `<rect class="bid-box" x="415" y="${bidY - 4.5}" width="29" height="9"/>`;
    out += text(418, bidY + 3, options.bid[1], 'bid-text');
    document.getElementById(id).innerHTML = out;
}

drawChart('eurusd', {
    title: 'EURUSD,H4&#160; 1.2065 1.2071 1.2060 1.2063',
    prices: [[165, '1.2125'], [275, '1.2070'], [384, '1.2015'], [493, '1.1960']],
    bid: [289, '1.2063'],
    dates: aprilDates,
    body: polyline('average', eurAverage) + candles(eurCandles)
});

drawChart('gbpusd', {
    title: 'GBPUSD,H4&#160; 1.3900 1.3900 1.3887 1.3891',
    prices: [[172, '1.3955'], [283, '1.3870'], [385, '1.3790'], [496, '1.3705']],
    bid: [256, '1.3891'],
    dates: marchDates,
    body: bars(parse(gbpBars)) + polyline('average', gbpAverage)
});

const histogram = spread(macdValues).map(([x, y]) => {
    const px = pixel(toX(x));
    return line('histogram', px, toY(467), px, toY(y));
}).join('');

drawChart('usdchf', {
    title: 'USDCHF,H4&#160; 0.9076 0.9087 0.9073 0.9083',
    prices: [[127, '0.9430'], [232, '0.9285'], [335, '0.9140']],
    bid: [376, '0.9083'],
    dates: marchDates,
    panel: 'MACD(12,26,9) -0.00081 0.00002',
    panelLabels: [[413, '0.00327'], [467, '0.00'], [540, '-0.00415']],
    body: bars(rangeBars(chfRange)) + histogram + polyline('signal', macdSignal)
});

drawChart('usdjpy', {
    title: 'USDJPY,H4&#160; 109.22 109.25 109.09 109.09',
    prices: [[121, '109.55'], [228, '108.70'], [335, '107.85']],
    bid: [178, '109.09'],
    dates: aprilDates,
    panel: 'CCI(14) -173.5043',
    panelLabels: [[413, '226.1446'], [433, '100'], [460, '0.00'], [486, '-100'], [540, '-365.4888']],
    body: candles(jpyCandles) + line('level', 2, 121.5, 414, 121.5) + line('grid', 2, 130.5, 414, 130.5) +
        line('level', 2, 138.5, 414, 138.5) + polyline('cci', cciLine)
});
```
